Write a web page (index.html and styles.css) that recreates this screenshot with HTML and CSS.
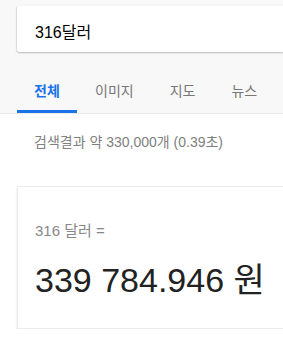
FILE: index.html
```html
<!DOCTYPE html>
<html lang="ko">
<head>
  <meta charset="UTF-8">
  <meta name="viewport" content="width=device-width, initial-scale=1.0">
  <title>316달러 - 검색</title>
  <link rel="stylesheet" href="styles.css">
</head>
<body>

  <div class="header">
    <div class="search-box">316달러</div>

    <div class="tabs">
      <div class="tab active">전체</div>
      <div class="tab">이미지</div>
      <div class="tab">지도</div>
      <div class="tab">뉴스</div>
    </div>
  </div>

  <div class="stats">검색결과 약 330,000개 (0.39초)</div>

  <div class="card">
    <div class="from">316 달러 =</div>
    <div class="to">339 784.946 원</div>
  </div>

</body>
</html>
```

FILE: styles.css
```css
body {
  margin: 0;
  font-family: 'Liberation Sans', 'Noto Sans CJK KR', sans-serif;
  background-color: #fff;
  color: #222;
  overflow: hidden;
}
.header {
  background-color: #f8f8f8;
  border-bottom: 1px solid #ebebeb;
  padding: 6px 0 0 17px;
}
.search-box {
  height: 46px;
  box-sizing: border-box;
  padding: 13px 0 0 18px;
  background: white;
  border-radius: 2px 0 0 2px;
  box-shadow: 0 1px 2px rgba(0, 0, 0, 0.25), -1px 0 0 rgba(0, 0, 0, 0.05);
  font-size: 16px;
  color: #000;
}
.tabs {
  display: flex;
  margin-top: 24px;
}
.tab {
  padding: 4px 18px 13px;
  font-size: 14px;
  color: #777;
  white-space: nowrap;
}
.tab.active {
  width: 60px;
  box-sizing: border-box;
  padding: 4px 0 10px;
  text-align: center;
  font-weight: bold;
  color: #1a73e8;
  border-bottom: 3px solid #1a73e8;
}
.tab.active + .tab {
  padding-left: 18px;
}
.stats {
  padding: 17px 0 0 34px;
  font-size: 14px;
  color: #808080;
}
.card {
  margin: 35px 0 0 17px;
  height: 143px;
  box-sizing: border-box;
  padding: 32px 0 0 17px;
  background: white;
  border: 1px solid #ebebeb;
  border-right: none;
  box-shadow: 0 2px 2px rgba(0, 0, 0, 0.12);
}
.from {
  font-size: 15px;
  color: #878787;
}
.to {
  margin-top: 13px;
  font-size: 34px;
  color: #222;
}
```
